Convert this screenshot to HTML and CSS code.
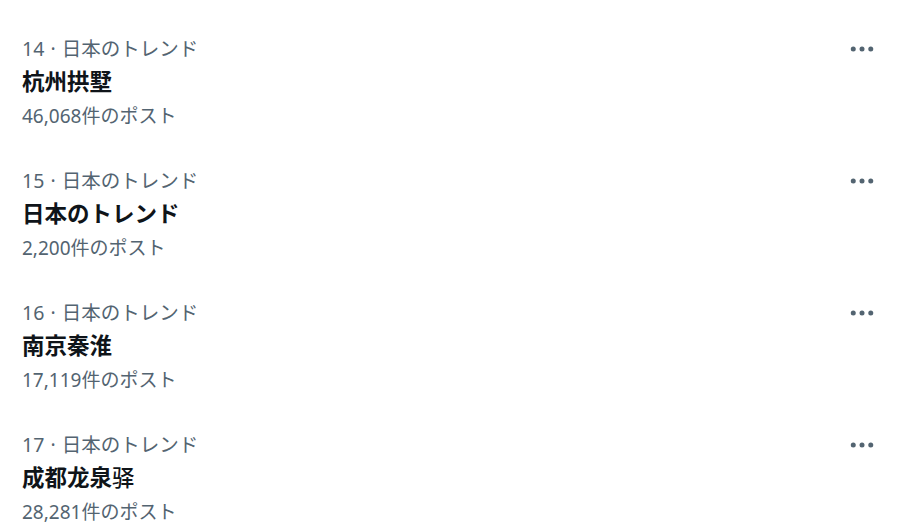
FILE: index.html
```html
<!DOCTYPE html>
<html lang="ja">
<head>
    <meta charset="UTF-8">
    <meta name="viewport" content="width=device-width, initial-scale=1.0">
    <title>トレンド</title>
    <link rel="stylesheet" href="styles.css">
</head>
<body>
    <div class="trends">
        <div class="trend">
            <div class="trend-text">
                <div class="meta">14 · 日本のトレンド</div>
                <div class="title">杭州拱墅</div>
                <div class="count">46,068件のポスト</div>
            </div>
            <button class="more" aria-label="その他">
                <svg viewBox="0 0 24 24" width="30" height="30"><circle cx="5" cy="12" r="2"/><circle cx="12" cy="12" r="2"/><circle cx="19" cy="12" r="2"/></svg>
            </button>
        </div>
        <div class="trend">
            <div class="trend-text">
                <div class="meta">15 · 日本のトレンド</div>
                <div class="title">日本のトレンド</div>
                <div class="count">2,200件のポスト</div>
            </div>
            <button class="more" aria-label="その他">
                <svg viewBox="0 0 24 24" width="30" height="30"><circle cx="5" cy="12" r="2"/><circle cx="12" cy="12" r="2"/><circle cx="19" cy="12" r="2"/></svg>
            </button>
        </div>
        <div class="trend">
            <div class="trend-text">
                <div class="meta">16 · 日本のトレンド</div>
                <div class="title">南京秦淮</div>
                <div class="count">17,119件のポスト</div>
            </div>
            <button class="more" aria-label="その他">
                <svg viewBox="0 0 24 24" width="30" height="30"><circle cx="5" cy="12" r="2"/><circle cx="12" cy="12" r="2"/><circle cx="19" cy="12" r="2"/></svg>
            </button>
        </div>
        <div class="trend">
            <div class="trend-text">
                <div class="meta">17 · 日本のトレンド</div>
                <div class="title">成都龙泉<span class="fallback">驿</span></div>
                <div class="count">28,281件のポスト</div>
            </div>
            <button class="more" aria-label="その他">
                <svg viewBox="0 0 24 24" width="30" height="30"><circle cx="5" cy="12" r="2"/><circle cx="12" cy="12" r="2"/><circle cx="19" cy="12" r="2"/></svg>
            </button>
        </div>
    </div>
</body>
</html>
```

FILE: styles.css
```css
body {
    margin: 0;
    background-color: #ffffff;
    font-family: "Noto Sans", "Noto Sans CJK JP", sans-serif;
    color: #0f1419;
}

.trends {
    padding-top: 17px;
}

.trend {
    display: flex;
    justify-content: space-between;
    align-items: flex-start;
    padding: 19px 24px 19px 22px;
}

.meta {
    font-size: 19.5px;
    line-height: 26px;
    color: #536471;
    word-spacing: 1px;
}

.title {
    font-size: 22.5px;
    line-height: 40px;
    font-weight: bold;
}

.fallback {
    font-weight: 500;
}

.count {
    font-size: 19px;
    line-height: 28px;
    color: #536471;
}

.more {
    border: none;
    background: none;
    padding: 0;
    margin-top: -2px;
    margin-right: -1px;
    fill: #536471;
    cursor: pointer;
}
```
